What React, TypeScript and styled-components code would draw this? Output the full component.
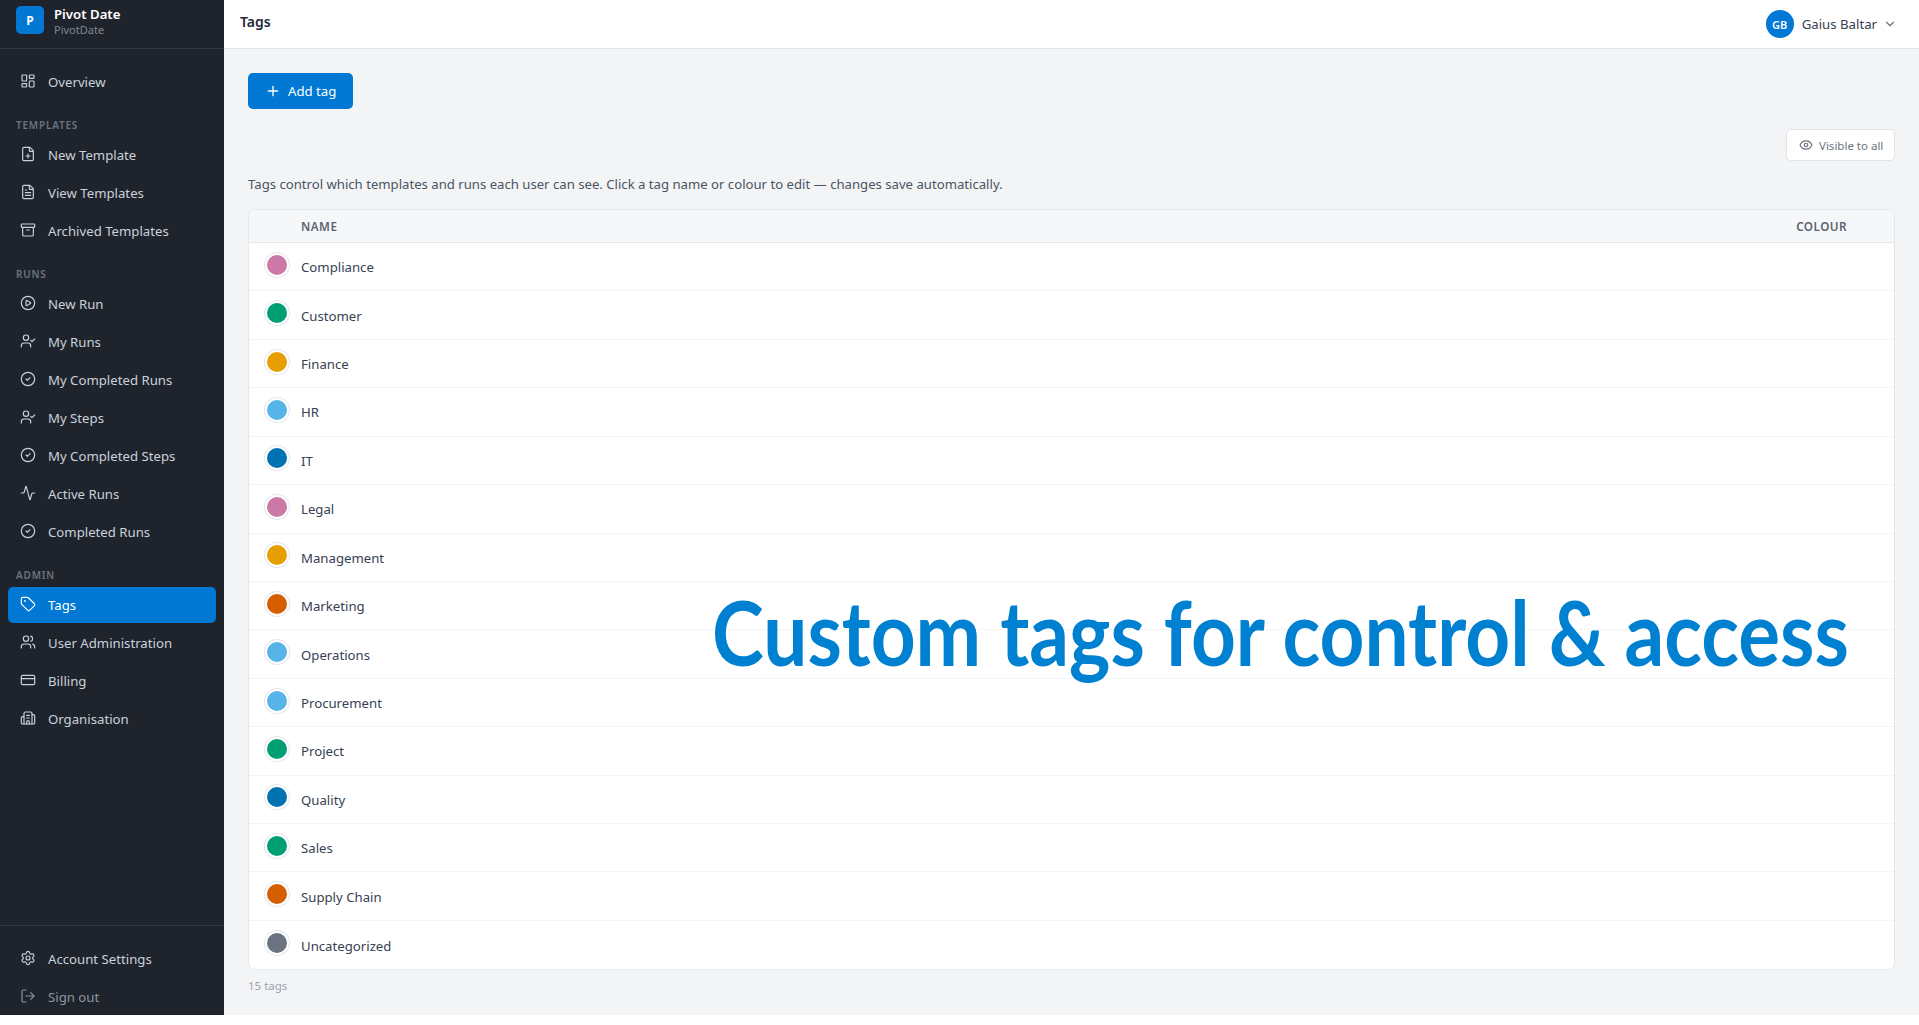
import React from 'react';
import styled, { createGlobalStyle } from 'styled-components';
import {
  Activity,
  Archive,
  Building2,
  ChevronDown,
  CircleCheck,
  CirclePlay,
  CreditCard,
  Eye,
  FilePlus,
  FileText,
  LayoutDashboard,
  LogOut,
  Plus,
  Settings,
  Tag,
  UserCheck,
  Users,
} from 'lucide-react';

const GlobalStyle = createGlobalStyle`
  html, body {
    margin: 0;
    padding: 0;
    background: #fff;
  }
  body {
    font-family: "Noto Sans", "Open Sans", sans-serif;
    font-size: 13px;
  }
  * {
    box-sizing: border-box;
  }
`;

const Shell = styled.div`
  position: relative;
  display: flex;
  height: 1015px;
  overflow: hidden;
`;

const Sidebar = styled.aside`
  width: 224px;
  flex-shrink: 0;
  display: flex;
  flex-direction: column;
  background: #1f242c;
`;

const Brand = styled.div`
  height: 49px;
  display: flex;
  align-items: flex-start;
  gap: 10px;
  padding: 6px 16px 0;
  border-bottom: 1px solid #323843;
`;

const BrandMark = styled.div`
  width: 28px;
  height: 28px;
  border-radius: 5px;
  background: #0078d4;
  color: #fff;
  font-weight: 700;
  font-size: 12px;
  display: flex;
  align-items: center;
  justify-content: center;
`;

const BrandName = styled.div`
  color: #fff;
  font-weight: 600;
  font-size: 13.2px;
  line-height: 16px;
`;

const BrandSub = styled.div`
  color: #7d8794;
  font-size: 11px;
  line-height: 14px;
  margin-top: 1px;
`;

const Nav = styled.nav`
  flex: 1;
  padding: 15px 8px 0;
`;

const SectionLabel = styled.div`
  height: 16px;
  margin: 17px 0 4px;
  padding-left: 8px;
  color: #6b7480;
  font-size: 10px;
  font-weight: 600;
  line-height: 16px;
  letter-spacing: 0.08em;
`;

const NavItem = styled.div<{ $active?: boolean; $muted?: boolean }>`
  height: 36px;
  margin-bottom: 2px;
  display: flex;
  align-items: center;
  gap: 12px;
  padding: 0 12px;
  border-radius: 5px;
  font-size: 13.2px;
  background: ${(p) => (p.$active ? '#0078d4' : 'transparent')};
  color: ${(p) => (p.$active ? '#fff' : p.$muted ? '#8b94a1' : '#c9d1dc')};
  svg {
    width: 16px;
    height: 16px;
    flex-shrink: 0;
    stroke-width: 1.75;
    margin-top: -2px;
  }
  &:last-child {
    margin-bottom: 0;
  }
`;

const SidebarFooter = styled.div`
  padding: 15px 8px 0;
  border-top: 1px solid #323843;
`;

const Main = styled.main`
  flex: 1;
  min-width: 0;
  display: flex;
  flex-direction: column;
  background: #f3f4f6;
`;

const TopBar = styled.header`
  height: 49px;
  flex-shrink: 0;
  display: flex;
  align-items: center;
  justify-content: space-between;
  padding: 0 22px 0 16px;
  background: #fff;
  border-bottom: 1px solid #e1e4ea;
`;

const PageTitle = styled.div`
  color: #1f2937;
  font-size: 14px;
  font-weight: 600;
  margin-top: -6px;
`;

const UserMenu = styled.div`
  display: flex;
  align-items: center;
  gap: 8px;
  color: #374151;
  font-size: 13.2px;
  svg {
    width: 14px;
    height: 14px;
    color: #6b7280;
    margin-left: -2px;
  }
`;

const Avatar = styled.div`
  width: 28px;
  height: 28px;
  border-radius: 50%;
  background: #0078d4;
  color: #fff;
  font-size: 11px;
  font-weight: 600;
  display: flex;
  align-items: center;
  justify-content: center;
`;

const Content = styled.div`
  flex: 1;
  padding: 24px 24px 0;
`;

const PrimaryButton = styled.button`
  height: 36px;
  width: 105px;
  display: flex;
  align-items: center;
  gap: 7px;
  padding: 0 17px;
  border: 0;
  border-radius: 5px;
  background: #0078d4;
  color: #fff;
  font-family: inherit;
  font-size: 13.2px;
  white-space: nowrap;
  svg {
    width: 16px;
    height: 16px;
    margin-top: -1px;
    flex-shrink: 0;
  }
`;

const ActionRow = styled.div`
  display: flex;
  justify-content: flex-end;
  margin-top: 20px;
`;

const GhostButton = styled.button`
  height: 32px;
  width: 109px;
  display: flex;
  align-items: center;
  gap: 6px;
  padding: 0 12px;
  border: 1px solid #e1e4ea;
  border-radius: 5px;
  background: #fff;
  color: #6b7280;
  font-family: inherit;
  font-size: 11.5px;
  white-space: nowrap;
  svg {
    width: 14px;
    height: 14px;
    margin-top: -1px;
    flex-shrink: 0;
  }
`;

const Description = styled.p`
  margin: 13px 0 15px;
  color: #4b5563;
  font-size: 13.15px;
  line-height: 20px;
`;

const TableCard = styled.div`
  background: #fff;
  border: 1px solid #e4e7ec;
  border-radius: 7px;
  overflow: hidden;
`;

const TableHead = styled.div`
  height: 33px;
  display: flex;
  align-items: center;
  justify-content: space-between;
  padding: 0 47px 0 52px;
  background: #f6f7f9;
  border-bottom: 1px solid #e4e7ec;
  color: #5b6472;
  font-size: 11.7px;
  font-weight: 600;
  letter-spacing: 0.04em;
`;

const Row = styled.div`
  height: 48.43px;
  display: flex;
  align-items: center;
  gap: 14px;
  padding: 0 0 0 18px;
  color: #374151;
  font-size: 13.2px;
  border-bottom: 1px solid #f3f4f6;
  &:last-child {
    border-bottom: 0;
  }
`;

const Swatch = styled.span<{ $colour: string }>`
  width: 20px;
  height: 20px;
  margin-top: -4px;
  border-radius: 50%;
  background: ${(p) => p.$colour};
  box-shadow: 0 0 0 2px #fff, 0 0 0 3px #e5e7eb;
`;

const RowName = styled.span`
  margin-top: 1px;
`;

const TagCount = styled.div`
  margin-top: 8px;
  color: #9ca3af;
  font-size: 11.5px;
  line-height: 16px;
`;

const Overlay = styled.div`
  position: absolute;
  left: 712px;
  top: 577px;
  color: #0080d0;
  font-family: Lato, "Noto Sans", sans-serif;
  font-size: 90px;
  font-weight: 700;
  line-height: 108px;
  white-space: nowrap;
  transform: scaleX(0.87);
  transform-origin: left top;
`;

const tags: [string, string][] = [
  ['Compliance', '#cc79a7'],
  ['Customer', '#009e73'],
  ['Finance', '#e69f00'],
  ['HR', '#56b4e9'],
  ['IT', '#0072b2'],
  ['Legal', '#cc79a7'],
  ['Management', '#e69f00'],
  ['Marketing', '#d55e00'],
  ['Operations', '#56b4e9'],
  ['Procurement', '#56b4e9'],
  ['Project', '#009e73'],
  ['Quality', '#0072b2'],
  ['Sales', '#009e73'],
  ['Supply Chain', '#d55e00'],
  ['Uncategorized', '#6b7280'],
];

export default function App() {
  return (
    <>
      <GlobalStyle />
      <Shell>
        <Sidebar>
          <Brand>
            <BrandMark>P</BrandMark>
            <div>
              <BrandName>Pivot Date</BrandName>
              <BrandSub>PivotDate</BrandSub>
            </div>
          </Brand>
          <Nav>
            <NavItem><LayoutDashboard />Overview</NavItem>
            <SectionLabel>TEMPLATES</SectionLabel>
            <NavItem><FilePlus />New Template</NavItem>
            <NavItem><FileText />View Templates</NavItem>
            <NavItem><Archive />Archived Templates</NavItem>
            <SectionLabel>RUNS</SectionLabel>
            <NavItem><CirclePlay />New Run</NavItem>
            <NavItem><UserCheck />My Runs</NavItem>
            <NavItem><CircleCheck />My Completed Runs</NavItem>
            <NavItem><UserCheck />My Steps</NavItem>
            <NavItem><CircleCheck />My Completed Steps</NavItem>
            <NavItem><Activity />Active Runs</NavItem>
            <NavItem><CircleCheck />Completed Runs</NavItem>
            <SectionLabel>ADMIN</SectionLabel>
            <NavItem $active><Tag />Tags</NavItem>
            <NavItem><Users />User Administration</NavItem>
            <NavItem><CreditCard />Billing</NavItem>
            <NavItem><Building2 />Organisation</NavItem>
          </Nav>
          <SidebarFooter>
            <NavItem><Settings />Account Settings</NavItem>
            <NavItem $muted><LogOut />Sign out</NavItem>
          </SidebarFooter>
        </Sidebar>
        <Main>
          <TopBar>
            <PageTitle>Tags</PageTitle>
            <UserMenu>
              <Avatar>GB</Avatar>
              Gaius Baltar
              <ChevronDown />
            </UserMenu>
          </TopBar>
          <Content>
            <PrimaryButton><Plus />Add tag</PrimaryButton>
            <ActionRow>
              <GhostButton><Eye />Visible to all</GhostButton>
            </ActionRow>
            <Description>
              Tags control which templates and runs each user can see. Click a tag name or colour to edit — changes save automatically.
            </Description>
            <TableCard>
              <TableHead>
                <span>NAME</span>
                <span>COLOUR</span>
              </TableHead>
              {tags.map(([name, colour]) => (
                <Row key={name}>
                  <Swatch $colour={colour} />
                  <RowName>{name}</RowName>
                </Row>
              ))}
            </TableCard>
            <TagCount>15 tags</TagCount>
          </Content>
        </Main>
        <Overlay>Custom tags for control &amp; access</Overlay>
      </Shell>
    </>
  );
}
